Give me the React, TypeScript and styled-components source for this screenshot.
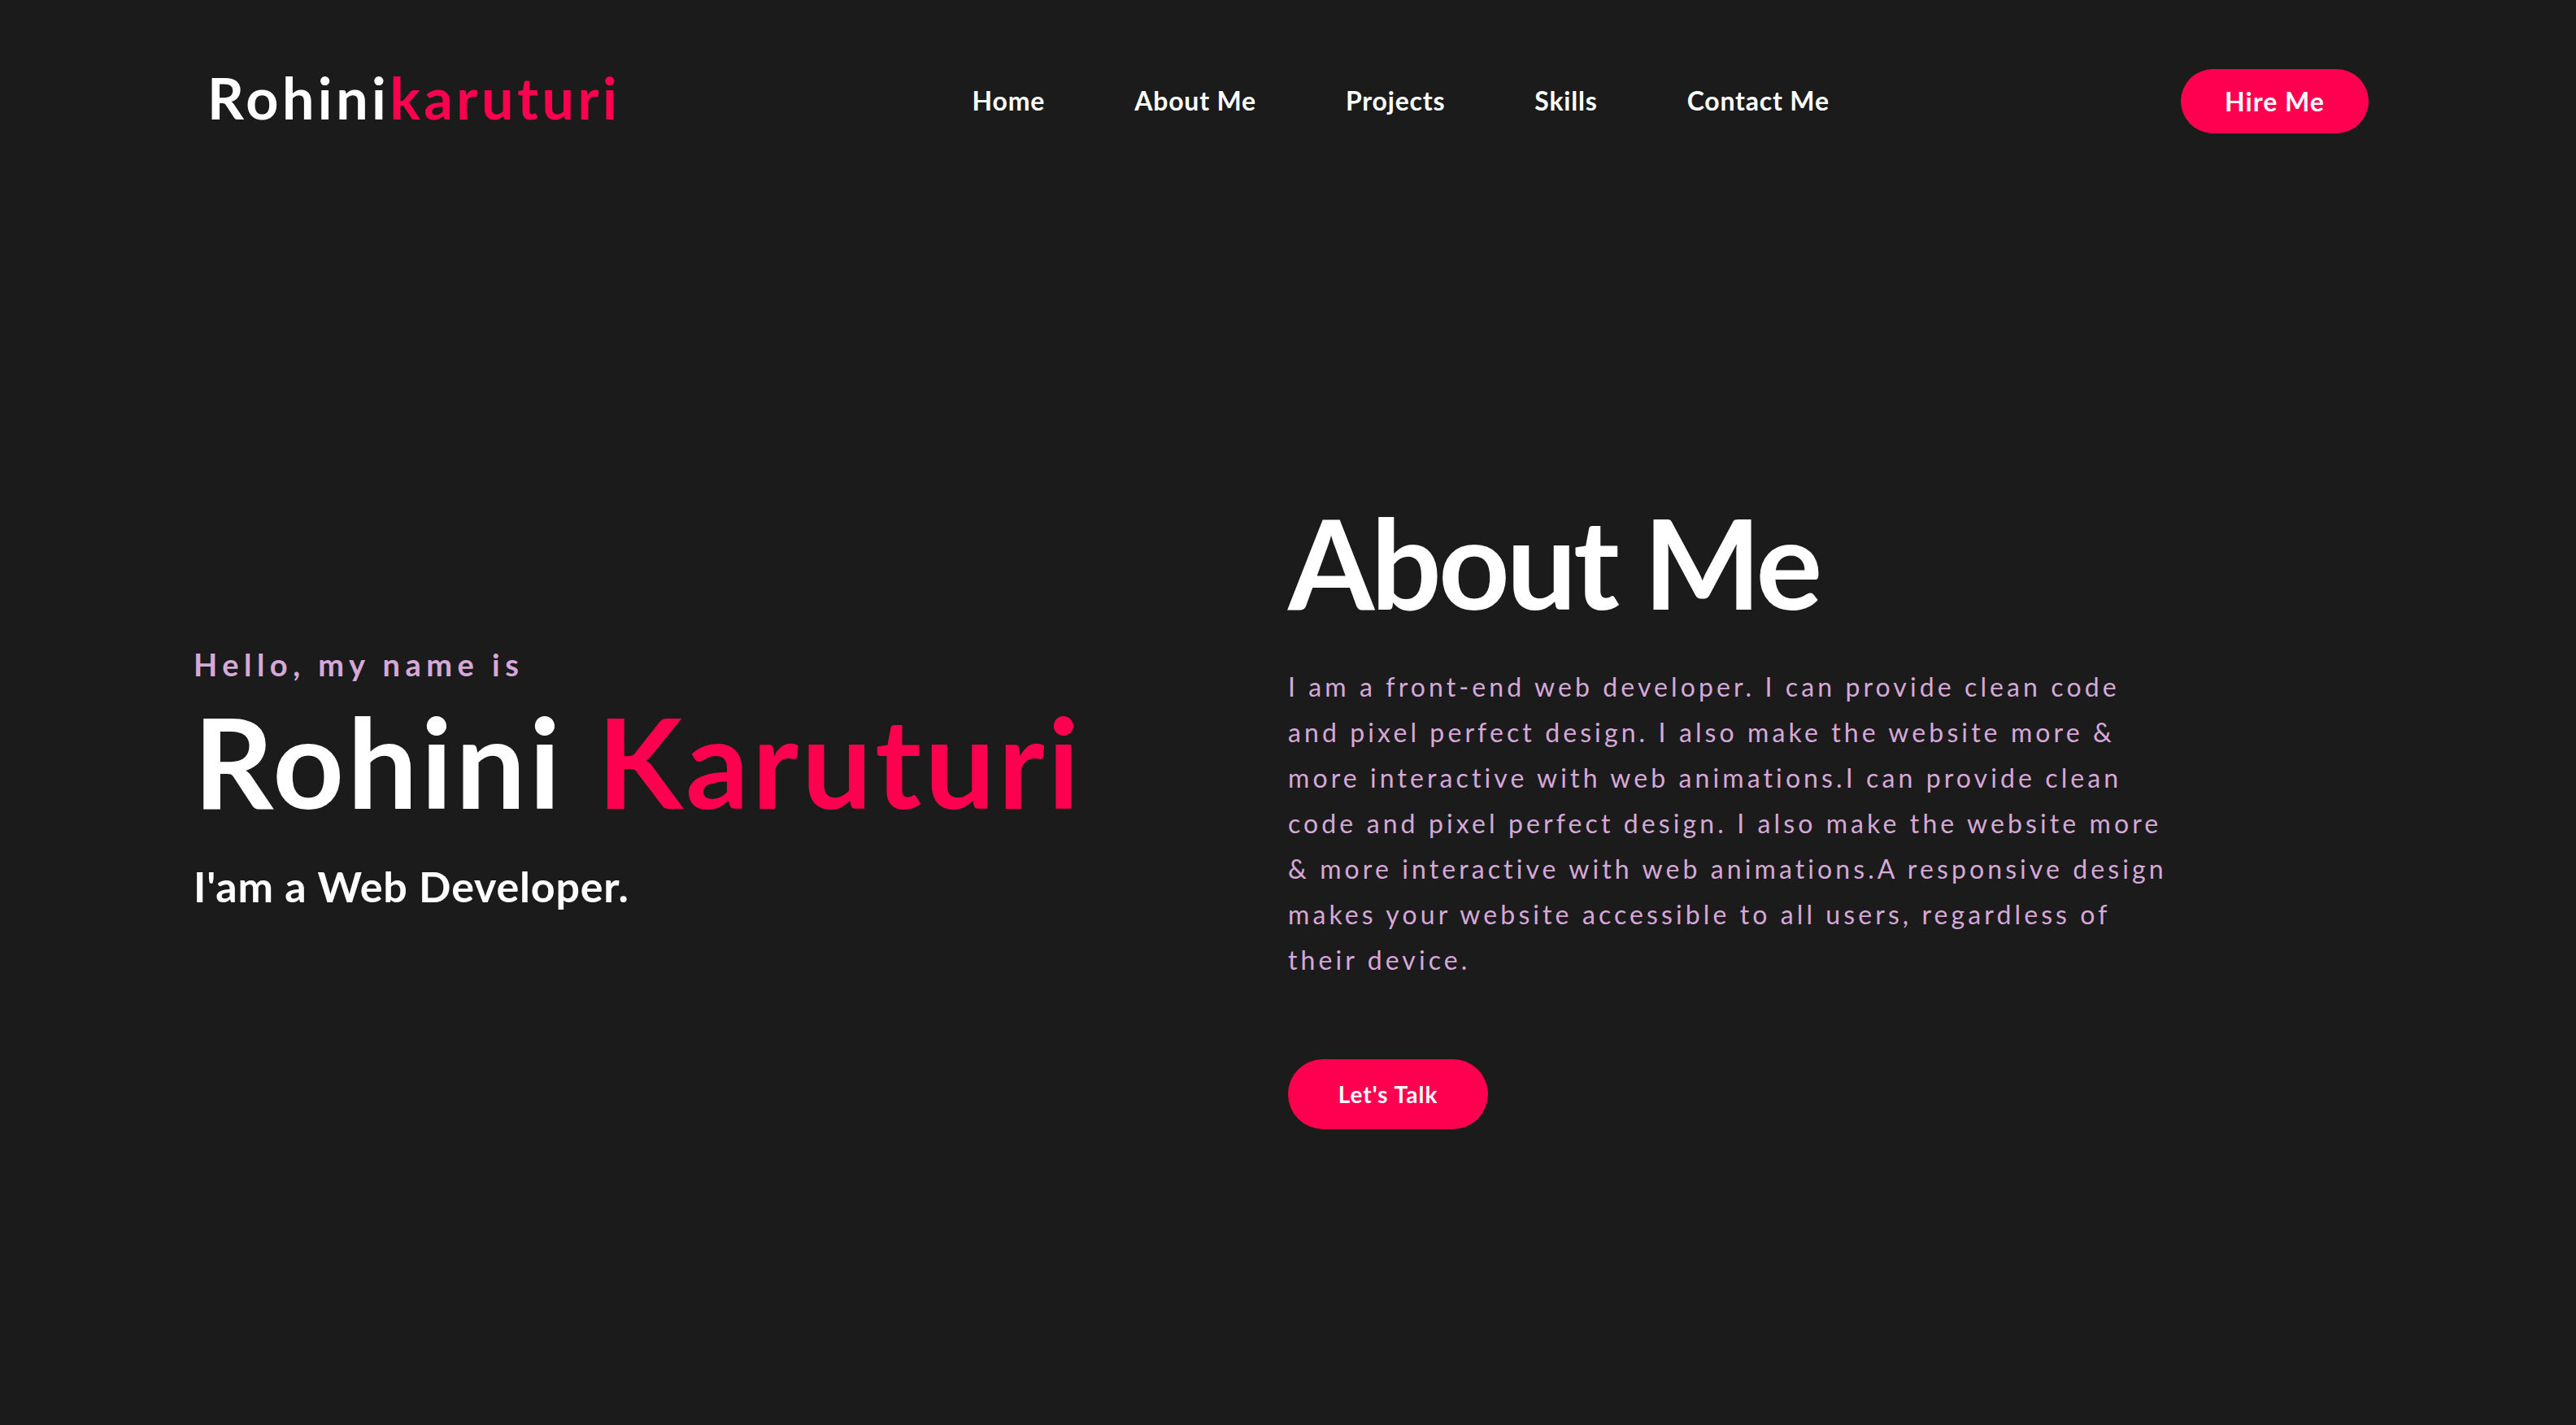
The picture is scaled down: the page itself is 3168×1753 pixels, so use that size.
import React from "react";
import styled, { createGlobalStyle } from "styled-components";

const pink = "#ff0050";
const lavender = "#d6a8d8";

const GlobalStyle = createGlobalStyle`
  html, body {
    margin: 0;
    padding: 0;
    background: #1b1b1b;
    font-family: 'Lato', 'Liberation Sans', sans-serif;
  }
  * {
    box-sizing: border-box;
  }
`;

const Page = styled.div`
  min-height: 100vh;
  background: #1b1b1b;
  color: white;
`;

const Header = styled.header`
  display: flex;
  align-items: center;
  justify-content: space-between;
  padding: 85px 255px 0;
`;

const Logo = styled.div`
  font-size: 70px;
  font-weight: 700;
  letter-spacing: 4.5px;
  line-height: 1.2;
  margin-top: -10px;
  color: white;

  span {
    color: ${pink};
  }
`;

const NavList = styled.nav`
  display: flex;
  align-items: center;
  gap: 110px;
`;

const NavLink = styled.a`
  font-size: 32px;
  font-weight: 700;
  letter-spacing: 0.8px;
  color: white;
  text-decoration: none;
  line-height: 1.2;
`;

const PillButton = styled.button<{ $w: number; $h: number; $size: number }>`
  width: ${(p) => p.$w}px;
  height: ${(p) => p.$h}px;
  border: none;
  border-radius: 50px;
  background: ${pink};
  color: white;
  font-family: inherit;
  font-size: ${(p) => p.$size}px;
  font-weight: 700;
  letter-spacing: 1px;
  cursor: pointer;
`;

const Hero = styled.section`
  display: grid;
  grid-template-columns: 1fr 1fr;
  align-items: center;
  min-height: calc(100vh - 164px);
`;

const LeftCol = styled.div`
  padding-left: 238px;
`;

const RightCol = styled.div`
  padding-top: 72px;
`;

const Hello = styled.p`
  margin: 0;
  font-size: 38px;
  font-weight: 700;
  letter-spacing: 6.5px;
  line-height: 1.2;
  color: ${lavender};
`;

const BigTitle = styled.h1<{ $mt?: number; $ls: number }>`
  margin: ${(p) => p.$mt ?? 0}px 0 0;
  font-size: 153px;
  font-weight: 700;
  line-height: 1.2;
  letter-spacing: ${(p) => p.$ls}px;
  color: white;

  span {
    color: ${pink};
  }
`;

const Subtitle = styled.h2`
  margin: 31px 0 0;
  font-size: 52px;
  font-weight: 700;
  line-height: 1.2;
  letter-spacing: 0.8px;
  color: white;
`;

const AboutText = styled.p`
  margin: 34px 0 0;
  width: 1089px;
  font-size: 32px;
  line-height: 56px;
  letter-spacing: 4.1px;
  color: ${lavender};
`;

const TalkWrap = styled.div`
  margin-top: 94px;
`;

export default function App() {
  return (
    <Page>
      <GlobalStyle />
      <Header>
        <Logo>
          Rohini<span>karuturi</span>
        </Logo>
        <NavList>
          <NavLink href="#">Home</NavLink>
          <NavLink href="#">About Me</NavLink>
          <NavLink href="#">Projects</NavLink>
          <NavLink href="#">Skills</NavLink>
          <NavLink href="#">Contact Me</NavLink>
        </NavList>
        <PillButton $w={231} $h={79} $size={32}>
          Hire Me
        </PillButton>
      </Header>
      <Hero>
        <LeftCol>
          <Hello>Hello, my name is</Hello>
          <BigTitle $mt={4} $ls={4}>
            Rohini <span>Karuturi</span>
          </BigTitle>
          <Subtitle>I'am a Web Developer.</Subtitle>
        </LeftCol>
        <RightCol>
          <BigTitle $ls={-4}>About Me</BigTitle>
          <AboutText>
            I am a front-end web developer. I can provide clean code and pixel
            perfect design. I also make the website more &amp; more interactive
            with web animations.I can provide clean code and pixel perfect
            design. I also make the website more &amp; more interactive with web
            animations.A responsive design makes your website accessible to all
            users, regardless of their device.
          </AboutText>
          <TalkWrap>
            <PillButton $w={246} $h={86} $size={28}>
              Let's Talk
            </PillButton>
          </TalkWrap>
        </RightCol>
      </Hero>
    </Page>
  );
}
